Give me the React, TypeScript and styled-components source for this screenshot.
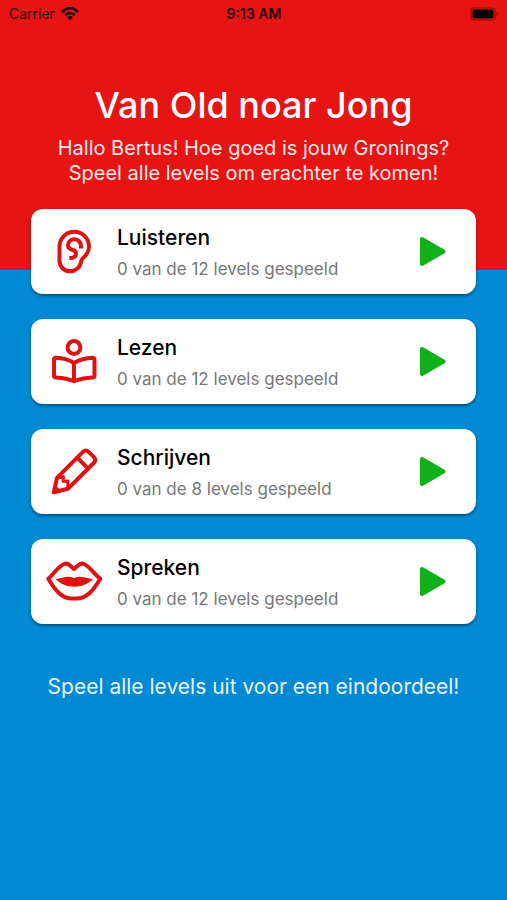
import React from "react";
import styled, { createGlobalStyle } from "styled-components";

const GlobalStyle = createGlobalStyle`
  *, *::before, *::after { box-sizing: border-box; }
  body {
    margin: 0;
    font-family: Inter, "Liberation Sans", sans-serif;
    color: #000;
  }
`;

const Screen = styled.div`
  min-height: 100vh;
  background: linear-gradient(#e61414 30vh, #0289d4 30vh);
`;

const StatusBar = styled.header`
  display: grid;
  grid-template-columns: 1fr auto 1fr;
  align-items: center;
  height: 28px;
  padding: 0 8px 0 9px;
  font-size: 14px;
  line-height: 20px;
  color: #2b0303;
`;

const Carrier = styled.span`
  display: flex;
  align-items: center;
  gap: 6px;
`;

const Clock = styled.time`
  font-weight: 600;
`;

const BatteryIcon = styled.svg`
  justify-self: end;
`;

const Main = styled.main`
  padding: 54px 31px 32px;
  text-align: center;
`;

const Title = styled.h1`
  margin: 0;
  font-size: 36px;
  line-height: 46px;
  font-weight: 500;
  color: #fff;
`;

const Message = styled.p<{ $spaced?: boolean }>`
  margin: ${(p) => (p.$spaced ? "50px 0 0" : "8px 0 0")};
  font-size: ${(p) => (p.$spaced ? 21 : 20)}px;
  line-height: 25px;
  color: ${(p) => (p.$spaced ? "#e9f5fc" : "#ffe6e6")};
`;

const CardList = styled.ul`
  display: flex;
  flex-direction: column;
  gap: 25px;
  margin: 23px 0 0;
  padding: 0;
  list-style: none;
`;

const Card = styled.button`
  display: flex;
  align-items: center;
  gap: 13px;
  width: 100%;
  height: 85px;
  padding: 0 30px 0 13px;
  border: 0;
  border-radius: 12px;
  background: #fff;
  box-shadow: 0 2px 3px rgba(0, 0, 0, 0.4);
  font: inherit;
  color: inherit;
  text-align: left;
  cursor: pointer;
`;

const CardIcon = styled.svg`
  flex: none;
  fill: none;
  stroke: #de1212;
  stroke-width: 4;
  stroke-linejoin: round;
  stroke-linecap: round;
`;

const CardText = styled.span`
  display: flex;
  flex: 1;
  flex-direction: column;
  gap: 6px;
`;

const CardTitle = styled.span`
  font-size: 21px;
  line-height: 28px;
  font-weight: 500;
`;

const CardProgress = styled.span`
  font-size: 17px;
  line-height: 22px;
  color: #777;
`;

const PlayIcon = styled.svg`
  flex: none;
  fill: #10b01a;
  stroke: #10b01a;
  stroke-width: 4;
  stroke-linejoin: round;
`;

const Ear = () => (
  <>
    <path d="M15.5 20.5A14.7 14.7 0 0 1 45 20.5C45 26 42 29.5 39 32C37.3 33.3 37.3 34.6 37 36.3C36 41.5 31.5 45.3 26 45.3A10.5 10.5 0 0 1 15.5 34.8Z" />
    <path
      strokeLinecap="butt"
      d="M37 22.5V20A6.7 6.7 0 0 0 30.3 13.3A6.2 6.2 0 0 0 24 19.3C24 22 26 23.3 28.3 23.8C30.8 24.3 32 25.7 32 27.8C32 30.8 29.5 32 25.3 32"
    />
  </>
);

const Reader = () => (
  <>
    <circle cx="30" cy="11.5" r="6.4" />
    <path d="M30 27C24.5 23.7 18.5 22 12.2 21.8Q10 21.8 10 24V39.5Q10 41.4 12 41.5C18.5 41.8 24.5 42.8 30 45.3C35.5 42.8 41.5 41.8 48.5 41.5Q50.5 41.4 50.5 39.5V24Q50.5 21.8 48.3 21.8C42 22 35.5 23.7 30 27ZM30 27V45" />
  </>
);

const Pencil = () => (
  <>
    <path d="M9.8 46.2L13 31.8L39.2 5.6Q41.8 3.4 44.6 5.8L50 11.2Q52.4 13.8 50.2 16.5L23.8 42.8Z" />
    <path d="M33.2 11.6L44.2 22.6" />
    <path strokeWidth="3" d="M13 32.2L19.4 30.6L19.2 35.2L24 35L23.8 42.4" />
    <path strokeWidth="3" d="M10 46L11.2 41L15 44.8Z" fill="#de1212" />
  </>
);

const Lips = () => (
  <>
    <path d="M4.2 22.7C9.5 18.5 14 10.5 20 8Q23 6.8 26 9.5L30 13L34 9.5Q37 6.8 40 8C46 10.5 50.5 18.5 56.3 22.7C50 33 43.5 42.6 32.5 42.6H28C17 42.6 10.5 33 4.2 22.7Z" />
    <path
      stroke="none"
      fill="#de1212"
      d="M11.5 23C16 22.5 21 20.6 25 20.7Q27.5 21 30 22Q32.5 21 35 20.7C39 20.6 44 22.5 49 23C45 27.5 38 30.7 30.2 30.7S15.5 27.5 11.5 23Z"
    />
  </>
);

const categories = [
  { name: "Luisteren", levels: 12, Icon: Ear },
  { name: "Lezen", levels: 12, Icon: Reader },
  { name: "Schrijven", levels: 8, Icon: Pencil },
  { name: "Spreken", levels: 12, Icon: Lips },
];

export default function App() {
  return (
    <>
      <GlobalStyle />
      <Screen>
        <StatusBar>
          <Carrier>
            Carrier
            <svg width="18" height="14" viewBox="0 0 18 14" fill="none" stroke="#1c0202" strokeWidth="2.6" aria-hidden="true">
              <path d="M1 5Q9-2.6 17 5M4.1 8.1Q9 3.8 13.9 8.1" />
              <path d="M6.2 10.4Q9 7.8 11.8 10.4L9 13.2Z" fill="#1c0202" stroke="none" />
            </svg>
          </Carrier>
          <Clock>9:13 AM</Clock>
          <BatteryIcon width="29" height="14" viewBox="0 0 29 14" aria-hidden="true">
            <rect x="1" y="1" width="24" height="12" rx="3.5" fill="none" stroke="#8e0c0c" strokeWidth="1.2" />
            <rect x="2.6" y="2.6" width="20.8" height="8.8" rx="2" fill="#000" />
            <path d="M26.5 5V9Q28 8.4 28 7T26.5 5Z" fill="#8e0c0c" />
          </BatteryIcon>
        </StatusBar>
        <Main>
          <Title>Van Old noar Jong</Title>
          <Message>
            Hallo Bertus! Hoe goed is jouw Gronings?
            <br />
            Speel alle levels om erachter te komen!
          </Message>
          <CardList>
            {categories.map(({ name, levels, Icon }) => (
              <li key={name}>
                <Card type="button">
                  <CardIcon width="60" height="51" viewBox="0 0 60 51" aria-hidden="true">
                    <Icon />
                  </CardIcon>
                  <CardText>
                    <CardTitle>{name}</CardTitle>
                    <CardProgress>0 van de {levels} levels gespeeld</CardProgress>
                  </CardText>
                  <PlayIcon width="27" height="31" viewBox="0 0 27 31" aria-hidden="true">
                    <path d="M3 3L24.5 15.5L3 28Z" />
                  </PlayIcon>
                </Card>
              </li>
            ))}
          </CardList>
          <Message $spaced>Speel alle levels uit voor een eindoordeel!</Message>
        </Main>
      </Screen>
    </>
  );
}
